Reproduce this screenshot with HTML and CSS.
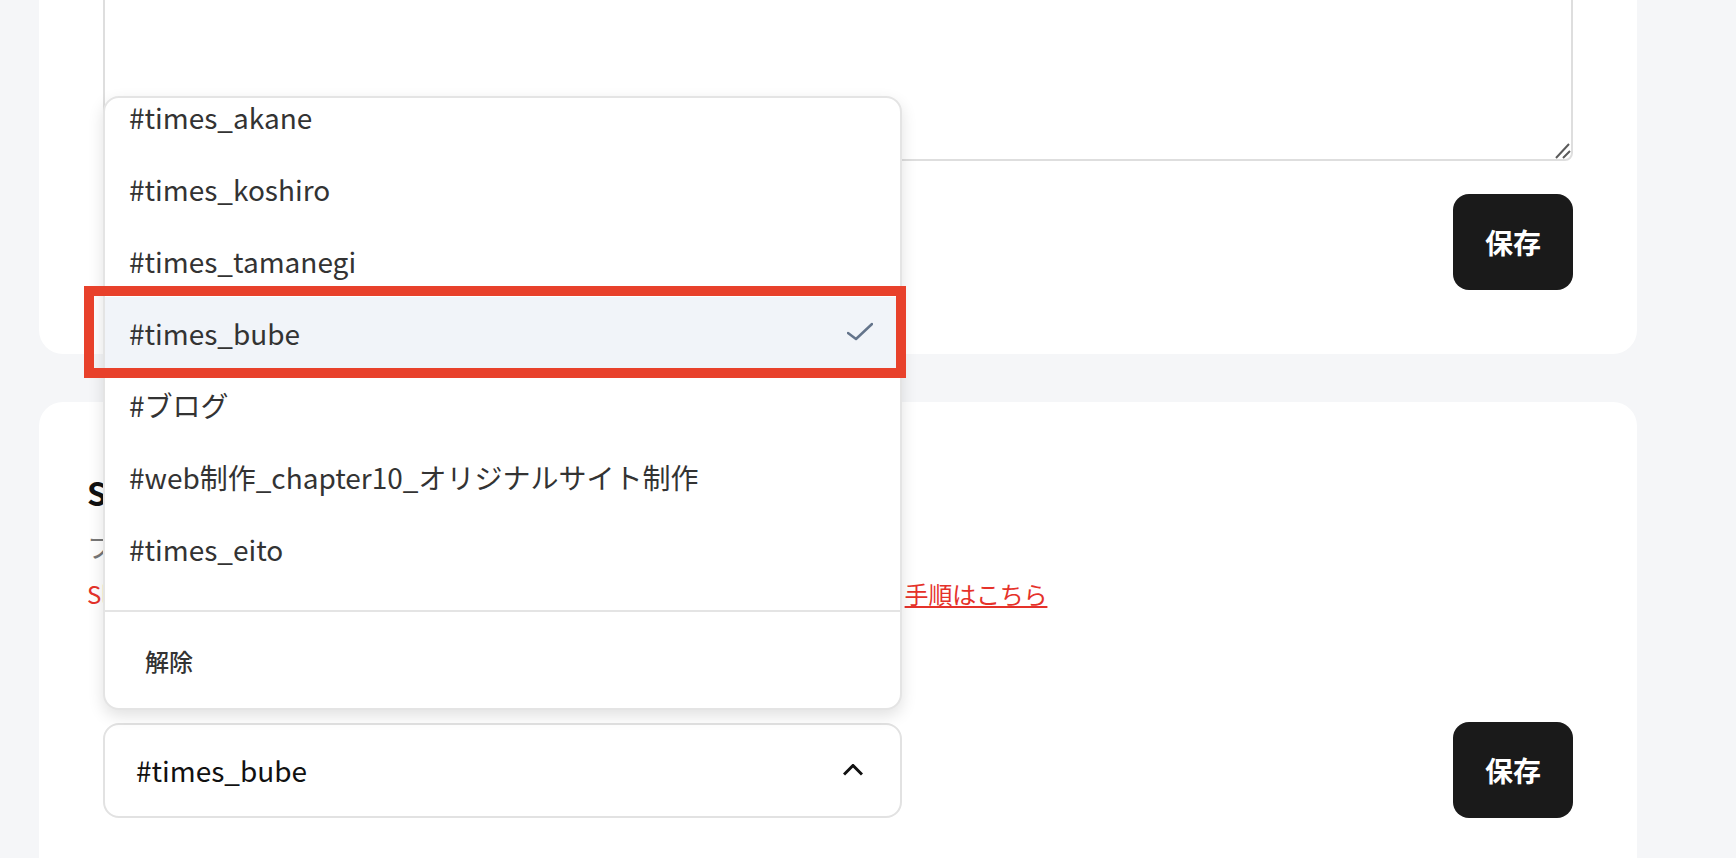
FILE: index.html
```html
<!DOCTYPE html>
<html lang="ja">
<head>
    <meta charset="UTF-8">
    <meta name="viewport" content="width=device-width, initial-scale=1.0">
    <title>フォーム設定</title>
    <link rel="stylesheet" href="styles.css">
</head>
<body>
    <main class="content">
        <section class="card">
            <div class="field">
                <div class="textarea-wrap">
                    <textarea class="textarea"></textarea>
                    <svg class="resizer" width="20" height="20" viewBox="0 0 20 20">
                        <path d="M5 19 L18 5 M12 19 L19 12" stroke="#5b5b5b" stroke-width="2" fill="none"/>
                    </svg>
                </div>
                <div class="actions">
                    <button class="save-button">保存</button>
                </div>
            </div>
        </section>

        <section class="card">
            <h2 class="card-title">Slack通知</h2>
            <p class="card-desc">フォームへの回答をSlackチャンネルに通知します。</p>
            <p class="card-note">Slack連携には、アプリを通知したいチャンネルへ追加する必要があります。<a href="#">手順はこちら</a></p>

            <div class="field-row">
                <div class="select">
                    <button class="select-trigger">
                        <span>#times_bube</span>
                        <svg width="20" height="12" viewBox="0 0 20 12">
                            <path d="M1 10.5 L10 1.5 L19 10.5" stroke="#111" stroke-width="3" fill="none"/>
                        </svg>
                    </button>

                    <div class="select-popup">
                        <div class="options">
                            <ul class="option-list">
                                <li class="option">#times_akane</li>
                                <li class="option">#times_koshiro</li>
                                <li class="option">#times_tamanegi</li>
                                <li class="option selected">
                                    <span>#times_bube</span>
                                    <svg class="check" width="26" height="19" viewBox="0 0 26 19">
                                        <path d="M1 11 L9 17 L25 2" stroke="#64748b" stroke-width="2.5" stroke-linecap="round" stroke-linejoin="round" fill="none"/>
                                    </svg>
                                </li>
                                <li class="option">#ブログ</li>
                                <li class="option">#web制作_chapter10_オリジナルサイト制作</li>
                                <li class="option">#times_eito</li>
                            </ul>
                        </div>
                        <div class="select-footer">
                            <button class="clear-button">解除</button>
                        </div>
                        <div class="highlight-mark"></div>
                    </div>
                </div>
                <button class="save-button">保存</button>
            </div>
        </section>
    </main>
</body>
</html>
```

FILE: styles.css
```css
body {
    margin: 0;
    background-color: #f5f6f8;
    font-family: "Noto Sans CJK JP", "Noto Sans", sans-serif;
    color: #111;
    overflow: hidden;
}

.content {
    width: 1598px;
    margin: -203px 0 0 39px;
}

.card {
    background-color: #fff;
    border-radius: 24px;
    padding: 64px 48px;
    margin-bottom: 48px;
}

.field {
    margin: 0 16px;
}

.textarea-wrap {
    position: relative;
}

.textarea {
    display: block;
    width: 100%;
    height: 300px;
    box-sizing: border-box;
    border: 2px solid #dedede;
    border-radius: 8px;
    resize: none;
    font: inherit;
}

.resizer {
    position: absolute;
    right: 2px;
    bottom: 2px;
}

.actions {
    display: flex;
    justify-content: flex-end;
    margin-top: 33px;
}

.save-button {
    height: 96px;
    width: 120px;
    background-color: #1a1a1a;
    color: #fff;
    border: none;
    border-radius: 16px;
    font-family: inherit;
    font-size: 28px;
    font-weight: 700;
    cursor: pointer;
}

.card-title {
    margin: 0;
    font-size: 32px;
    line-height: 52px;
    font-weight: 700;
    color: #111;
}

.card-desc {
    margin: 8px 0 0;
    font-size: 26px;
    line-height: 42px;
    color: #777;
}

.card-note {
    margin: 6px 0 0;
    font-size: 24px;
    line-height: 40px;
    letter-spacing: -0.2px;
    color: #e5322a;
}

.card-note a {
    color: #e5322a;
    text-decoration: underline;
}

.field-row {
    display: flex;
    justify-content: space-between;
    align-items: center;
    margin: 108px 16px 0;
}

.select {
    position: relative;
    width: 799px;
}

.select-trigger {
    display: flex;
    justify-content: space-between;
    align-items: center;
    width: 100%;
    height: 95px;
    box-sizing: border-box;
    padding: 0 37px 0 31px;
    background-color: #fff;
    border: 2px solid #e2e2e2;
    border-radius: 16px;
    font-family: inherit;
    font-size: 28px;
    color: #111;
    text-align: left;
}

.select-popup {
    position: absolute;
    left: 0;
    right: 0;
    bottom: calc(100% + 13px);
    height: 614px;
    box-sizing: border-box;
    display: flex;
    flex-direction: column;
    background-color: #fff;
    border: 2px solid #e4e4e4;
    border-radius: 16px;
    box-shadow: 0 6px 16px rgba(0, 0, 0, 0.12);
    z-index: 10;
}

.options {
    height: 512px;
    overflow: hidden;
    border-radius: 14px 14px 0 0;
}

.option-list {
    list-style: none;
    margin: -17px 0 0;
    padding: 0;
}

.option {
    display: flex;
    justify-content: space-between;
    align-items: center;
    height: 72px;
    padding: 0 27px 0 24px;
    font-size: 28px;
    color: #333;
    white-space: nowrap;
}

.option.selected {
    background-color: #f1f4f9;
}

.check {
    margin-top: -3px;
}

.select-footer {
    border-top: 2px solid #e4e4e4;
    padding: 10px 8px 8px;
}

.clear-button {
    height: 78px;
    padding: 0 32px;
    background: none;
    border: none;
    font-family: inherit;
    font-size: 24px;
    font-weight: 500;
    color: #333;
}

/* annotation frame around the selected row */
.highlight-mark {
    position: absolute;
    left: -21px;
    top: 188px;
    width: 822px;
    height: 92px;
    box-sizing: border-box;
    border: 10px solid #e8412b;
    pointer-events: none;
}
```
